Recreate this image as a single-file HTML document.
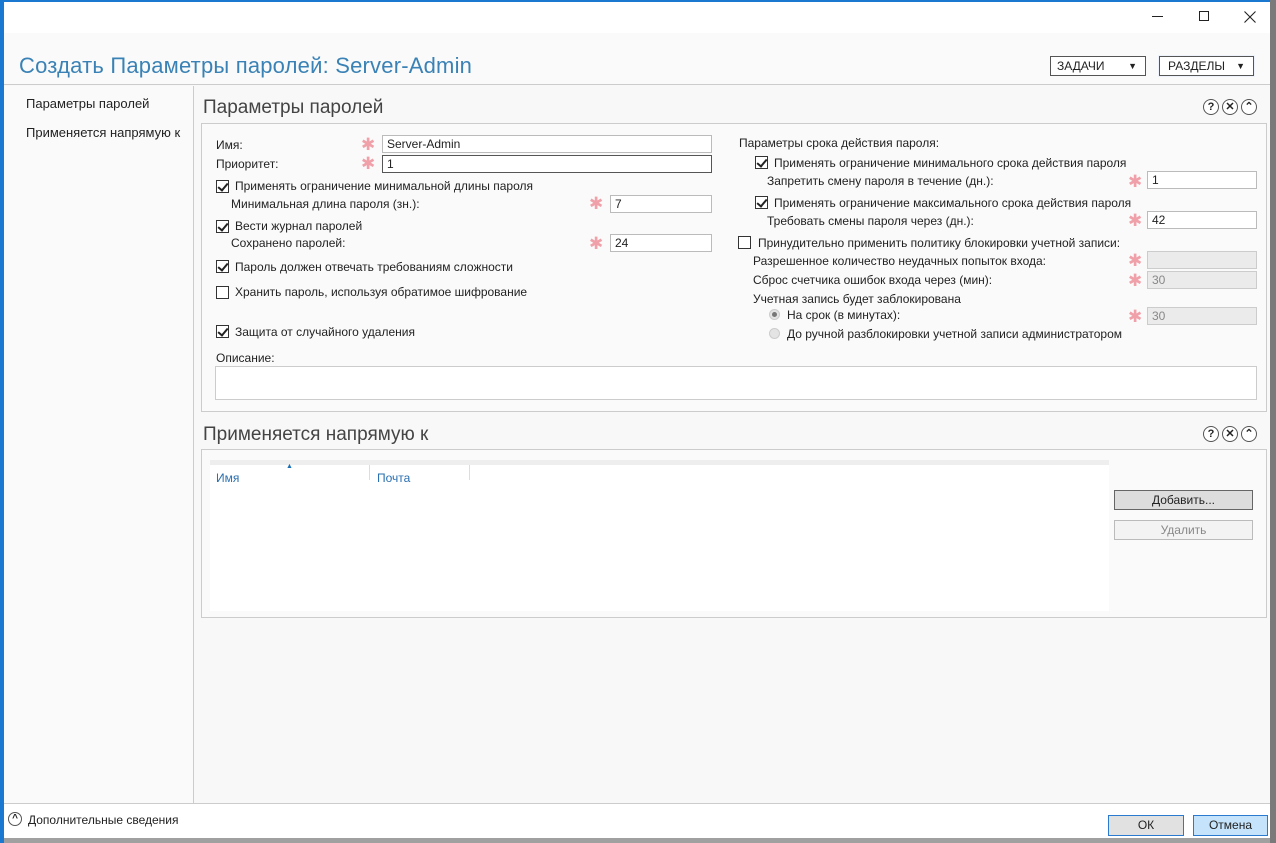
<!DOCTYPE html>
<html><head><meta charset="utf-8"><style>
*{margin:0;padding:0;box-sizing:border-box}
body{width:1276px;height:843px;position:relative;overflow:hidden;background:#a0a0a0;font-family:"Liberation Sans",sans-serif;font-size:12px;color:#222}
.a{position:absolute;white-space:nowrap}
.t{position:absolute;white-space:nowrap;line-height:14px;font-size:12px}
.inp{position:absolute;height:18px;border:1px solid #bbb;background:#fff;padding-left:4px;line-height:16px;font-size:12px}
.dis{background:#ebebeb;border-color:#ccc;color:#888}
.cb{position:absolute;width:13px;height:13px;border:1px solid #333;background:#fff}
.cb.on::after{content:"";position:absolute;left:3px;top:0px;width:4px;height:8px;border:solid #222;border-width:0 2px 2px 0;transform:rotate(40deg)}
.st{position:absolute;color:#f0a0a8;font-size:17px;line-height:14px}
.rd{position:absolute;width:11px;height:11px;border-radius:50%;border:1px solid #ccc;background:#e4e4e4}
.ic{position:absolute;width:16px;height:16px;border:1px solid #555;border-radius:50%;font-size:11px;line-height:14px;text-align:center;font-weight:bold;background:#fff}
</style></head><body>
<div class="a" style="left:0;top:0;width:1270px;height:838px;background:#f8f8f8"></div>
<div class="a" style="left:0;top:0;width:1276px;height:2px;background:#1a78d0"></div>
<div class="a" style="left:0;top:0;width:4px;height:843px;background:#1a78d0"></div>
<div class="a" style="left:1270px;top:0;width:6px;height:843px;background:#7a7a7a"></div>
<div class="a" style="left:4px;top:2px;width:1266px;height:31px;background:#fff"></div>
<div class="a" style="left:1152px;top:16px;width:11px;height:1px;background:#222"></div>
<div class="a" style="left:1199px;top:11px;width:10px;height:10px;border:1px solid #222"></div>
<svg class="a" style="left:1244px;top:11px" width="12" height="12"><path d="M0.5 0.5L11.5 11.5M11.5 0.5L0.5 11.5" stroke="#222" stroke-width="1.1"/></svg>
<div class="a" style="left:4px;top:33px;width:1266px;height:52px;background:#fafafa;border-bottom:1px solid #ccc"></div>
<div class="a" style="left:19px;top:52px;font-size:22px;color:#3a82b5;line-height:28px;letter-spacing:0.2px">Создать Параметры паролей: Server-Admin</div>
<div class="a" style="left:1050px;top:56px;width:96px;height:20px;border:1px solid #555;background:#fff;padding-left:6px;line-height:18px;font-size:12px">ЗАДАЧИ<span style="position:absolute;right:8px;font-size:9px">▼</span></div>
<div class="a" style="left:1158px;top:55px;width:97px;height:22px;background:#eef3fb"></div>
<div class="a" style="left:1159px;top:56px;width:95px;height:20px;border:1px solid #555;background:#fff;padding-left:8px;line-height:18px;font-size:12px">РАЗДЕЛЫ<span style="position:absolute;right:8px;font-size:9px">▼</span></div>
<div class="a" style="left:4px;top:86px;width:190px;height:717px;background:#fafafa;border-right:1px solid #ccc"></div>
<div class="t" style="left:26px;top:97px;font-size:13px">Параметры паролей</div>
<div class="t" style="left:26px;top:126px;font-size:13px">Применяется напрямую к</div>
<div class="a" style="left:203px;top:96px;font-size:19px;color:#444;line-height:24px">Параметры паролей</div>
<div class="ic" style="left:1203px;top:99px">?</div><div class="ic" style="left:1222px;top:99px">✕</div><div class="ic" style="left:1241px;top:99px">⌃</div>
<div class="a" style="left:201px;top:123px;width:1066px;height:289px;background:#fafafa;border:1px solid #ccc"></div>
<div class="t" style="left:216px;top:138px">Имя:</div><div class="st" style="left:361px;top:138px">✱</div><div class="inp" style="left:382px;top:135px;width:330px">Server-Admin</div>
<div class="t" style="left:216px;top:157px">Приоритет:</div><div class="st" style="left:361px;top:157px">✱</div><div class="inp" style="left:382px;top:155px;width:330px;border-color:#555">1</div>
<div class="cb on" style="left:216px;top:180px"></div><div class="t" style="left:235px;top:179px">Применять ограничение минимальной длины пароля</div>
<div class="t" style="left:231px;top:197px">Минимальная длина пароля (зн.):</div><div class="st" style="left:589px;top:197px">✱</div><div class="inp" style="left:610px;top:195px;width:102px">7</div>
<div class="cb on" style="left:216px;top:220px"></div><div class="t" style="left:235px;top:219px">Вести журнал паролей</div>
<div class="t" style="left:231px;top:236px">Сохранено паролей:</div><div class="st" style="left:589px;top:237px">✱</div><div class="inp" style="left:610px;top:234px;width:102px">24</div>
<div class="cb on" style="left:216px;top:260px"></div><div class="t" style="left:235px;top:260px">Пароль должен отвечать требованиям сложности</div>
<div class="cb" style="left:216px;top:286px"></div><div class="t" style="left:235px;top:285px">Хранить пароль, используя обратимое шифрование</div>
<div class="cb on" style="left:216px;top:325px"></div><div class="t" style="left:235px;top:325px">Защита от случайного удаления</div>
<div class="t" style="left:216px;top:351px">Описание:</div>
<div class="inp" style="left:215px;top:366px;width:1042px;height:34px;border-color:#ccc"></div>
<div class="t" style="left:739px;top:136px">Параметры срока действия пароля:</div>
<div class="cb on" style="left:755px;top:156px"></div><div class="t" style="left:774px;top:156px">Применять ограничение минимального срока действия пароля</div>
<div class="t" style="left:767px;top:174px">Запретить смену пароля в течение (дн.):</div><div class="st" style="left:1128px;top:175px">✱</div><div class="inp" style="left:1147px;top:171px;width:110px">1</div>
<div class="cb on" style="left:755px;top:196px"></div><div class="t" style="left:774px;top:196px">Применять ограничение максимального срока действия пароля</div>
<div class="t" style="left:767px;top:214px">Требовать смены пароля через (дн.):</div><div class="st" style="left:1128px;top:214px">✱</div><div class="inp" style="left:1147px;top:211px;width:110px">42</div>
<div class="cb" style="left:738px;top:236px"></div><div class="t" style="left:758px;top:236px">Принудительно применить политику блокировки учетной записи:</div>
<div class="t" style="left:753px;top:254px">Разрешенное количество неудачных попыток входа:</div><div class="st" style="left:1128px;top:254px">✱</div><div class="inp dis" style="left:1147px;top:251px;width:110px"></div>
<div class="t" style="left:753px;top:273px">Сброс счетчика ошибок входа через (мин):</div><div class="st" style="left:1128px;top:274px">✱</div><div class="inp dis" style="left:1147px;top:271px;width:110px">30</div>
<div class="t" style="left:753px;top:292px">Учетная запись будет заблокирована</div>
<div class="rd" style="left:769px;top:309px"></div><div class="a" style="left:772px;top:312px;width:5px;height:5px;border-radius:50%;background:#777"></div><div class="t" style="left:787px;top:308px">На срок (в минутах):</div><div class="st" style="left:1128px;top:310px">✱</div><div class="inp dis" style="left:1147px;top:307px;width:110px">30</div>
<div class="rd" style="left:769px;top:328px"></div><div class="t" style="left:787px;top:327px">До ручной разблокировки учетной записи администратором</div>
<div class="a" style="left:203px;top:423px;font-size:19px;color:#444;line-height:24px">Применяется напрямую к</div>
<div class="ic" style="left:1203px;top:426px">?</div><div class="ic" style="left:1222px;top:426px">✕</div><div class="ic" style="left:1241px;top:426px">⌃</div>
<div class="a" style="left:201px;top:449px;width:1066px;height:169px;background:#fafafa;border:1px solid #ccc"></div>
<div class="a" style="left:210px;top:460px;width:899px;height:151px;background:#fff;border-top:5px solid #eee"></div>
<div class="a" style="left:369px;top:465px;width:1px;height:15px;background:#ddd"></div>
<div class="a" style="left:469px;top:465px;width:1px;height:15px;background:#ddd"></div>
<div class="a" style="left:286px;top:463px;font-size:7px;color:#1a6fb5">▲</div>
<div class="t" style="left:216px;top:471px;color:#2a6fb0">Имя</div>
<div class="t" style="left:377px;top:471px;color:#2a6fb0">Почта</div>
<div class="a" style="left:1114px;top:490px;width:139px;height:20px;background:#ddd;border:1px solid #666;text-align:center;line-height:18px">Добавить...</div>
<div class="a" style="left:1114px;top:520px;width:139px;height:20px;background:#f3f3f3;border:1px solid #bbb;color:#888;text-align:center;line-height:18px">Удалить</div>
<div class="a" style="left:4px;top:803px;width:1266px;height:35px;background:#fff;border-top:1px solid #ccc"></div>
<div class="ic" style="left:8px;top:812px;width:14px;height:14px;font-size:10px;line-height:12px">^</div>
<div class="t" style="left:28px;top:813px">Дополнительные сведения</div>
<div class="a" style="left:1108px;top:815px;width:76px;height:21px;background:#e1e1e1;border:1px solid #2a7ad0;text-align:center;line-height:19px">ОК</div>
<div class="a" style="left:1193px;top:815px;width:75px;height:21px;background:#c5e3fa;border:1px solid #2a7ad0;text-align:center;line-height:19px">Отмена</div>
</body></html>
